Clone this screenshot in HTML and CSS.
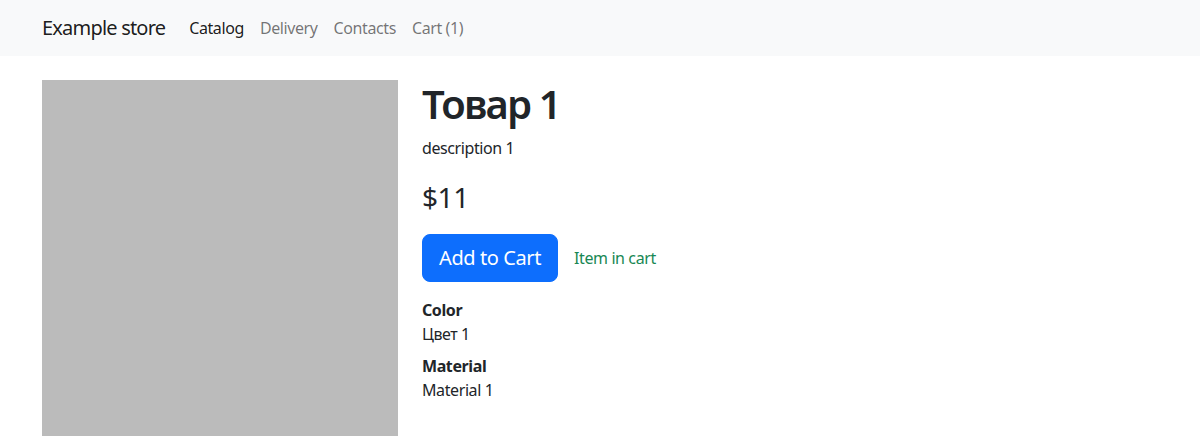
FILE: index.html
```html
<!DOCTYPE html>
<html lang="ru">
<head>
<meta charset="utf-8">
<title>Example store</title>
<link rel="stylesheet" href="styles.css">
</head>
<body>
<nav class="navbar">
  <div class="container nav-inner">
    <a class="brand" href="#">Example store</a>
    <ul class="nav">
      <li><a class="nav-link active" href="#">Catalog</a></li>
      <li><a class="nav-link" href="#">Delivery</a></li>
      <li><a class="nav-link" href="#">Contacts</a></li>
      <li><a class="nav-link" href="#">Cart (1)</a></li>
    </ul>
  </div>
</nav>
<main class="container product">
  <div class="photo"></div>
  <div class="info">
    <h1 class="title">Товар 1</h1>
    <p class="desc">description 1</p>
    <p class="price">$11</p>
    <div class="actions">
      <button class="btn" type="button">Add to Cart</button>
      <span class="in-cart">Item in cart</span>
    </div>
    <dl class="props">
      <dt>Color</dt>
      <dd>Цвет 1</dd>
      <dt>Material</dt>
      <dd>Material 1</dd>
    </dl>
  </div>
</main>
</body>
</html>
```
FILE: styles.css
```css
* { box-sizing: border-box; }
html, body { margin: 0; }
body {
  font-family: "Noto Sans", "Liberation Sans", sans-serif;
  font-size: 16px;
  line-height: 1.5;
  letter-spacing: -0.025em;
  color: #212529;
  background: #fff;
  overflow: hidden;
}
.container {
  width: 1140px;
  margin: 0 auto;
  padding: 0 12px;
}
.navbar {
  background: #f8f9fa;
  padding: 8px 0;
}
.nav-inner {
  display: flex;
  align-items: center;
}
.brand {
  font-size: 20px;
  line-height: 30px;
  letter-spacing: -0.04em;
  padding: 5px 0;
  margin-right: 16px;
  color: rgba(0,0,0,.9);
  text-decoration: none;
}
.nav {
  display: flex;
  list-style: none;
  margin: 0;
  padding: 0;
}
.nav-link {
  display: block;
  padding: 8px;
  letter-spacing: -0.025em;
  color: rgba(0,0,0,.55);
  text-decoration: none;
}
.nav-link.active { color: rgba(0,0,0,.9); }
.product {
  display: flex;
  gap: 24px;
  margin-top: 24px;
}
.photo {
  width: 356px;
  height: 356px;
  flex: none;
  background: #bbbbbb;
}
.info { flex: 1; }
.title {
  margin: 0 0 8px;
  font-size: 40px;
  font-weight: 600;
  line-height: 1.2;
  letter-spacing: -0.045em;
}
.desc { margin: 0 0 16px; }
.price {
  margin: 0 0 16px;
  font-size: 28px;
  line-height: 1.5;
}
.actions {
  display: flex;
  align-items: center;
  gap: 16px;
  margin-bottom: 16px;
}
.btn {
  font-family: inherit;
  font-size: 20px;
  line-height: 30px;
  letter-spacing: inherit;
  padding: 8px 16px;
  border: 1px solid #0d6efd;
  border-radius: 8px;
  background: #0d6efd;
  color: #fff;
  cursor: pointer;
}
.in-cart { color: #198754; }
.props { margin: 0; }
.props dt { font-weight: 700; }
.props dd { margin: 0 0 8px; }
```
